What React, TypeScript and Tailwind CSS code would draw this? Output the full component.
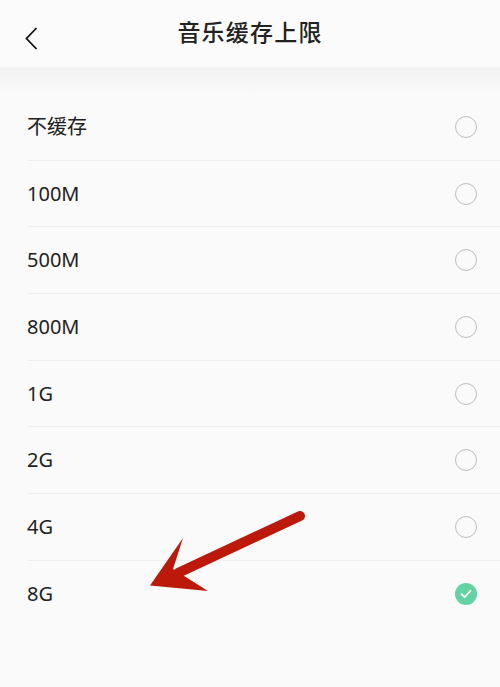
import React, { useState } from 'react';

const OPTIONS = ['不缓存', '100M', '500M', '800M', '1G', '2G', '4G', '8G'];

const Radio = ({ checked }: { checked: boolean }) =>
  checked ? (
    <div className="w-[22px] h-[22px] rounded-full bg-[#62d3a2] flex items-center justify-center">
      <svg width="12" height="10" viewBox="0 0 12 10" fill="none">
        <path d="M1.5 5.2 4.6 8.2 10.5 1.8" stroke="#fff" strokeWidth="1.8" strokeLinecap="round" strokeLinejoin="round" />
      </svg>
    </div>
  ) : (
    <div className="w-[22px] h-[22px] rounded-full border border-[#bdbdbd]" />
  );

export default function App() {
  const [selected, setSelected] = useState('8G');

  return (
    <div
      className="relative w-[500px] h-[687px] bg-[#fafafa] text-[#222] overflow-hidden"
      style={{ fontFamily: '"Noto Sans", "Noto Sans CJK SC", sans-serif' }}
    >
      {/* Header */}
      <div className="relative h-[67px] flex items-center justify-center bg-[#fbfbfb]">
        <button className="absolute left-[25px] top-[27px]">
          <svg width="13" height="23" viewBox="0 0 13 23" fill="none">
            <path d="M11.5 1 1.5 11.5 11.5 22" stroke="#111" strokeWidth="1.8" />
          </svg>
        </button>
        <h1 className="text-[23px] font-medium tracking-[1.2px] mt-[-2px]">音乐缓存上限</h1>
      </div>
      <div className="h-[27px] bg-gradient-to-b from-[#f1f1f1] to-[#fafafa]" />

      {/* Options */}
      <div className="flex flex-col">
        {OPTIONS.map((opt, i) => (
          <div
            key={opt}
            onClick={() => setSelected(opt)}
            className={`ml-[27px] pr-[23px] h-[66.7px] flex items-center justify-between ${
              i < OPTIONS.length - 1 ? 'border-b border-[#efefef]' : ''
            }`}
          >
            <span className="text-[20px]">{opt}</span>
            <Radio checked={selected === opt} />
          </div>
        ))}
      </div>

      {/* Annotation arrow */}
      <svg className="absolute left-0 top-0 pointer-events-none" width="500" height="687" viewBox="0 0 500 687">
        <line x1="300" y1="516" x2="178" y2="573" stroke="#bc190b" strokeWidth="10" strokeLinecap="round" />
        <path d="M150 585.5 183 538 173 569 208 591Z" fill="#bc190b" />
      </svg>
    </div>
  );
}
